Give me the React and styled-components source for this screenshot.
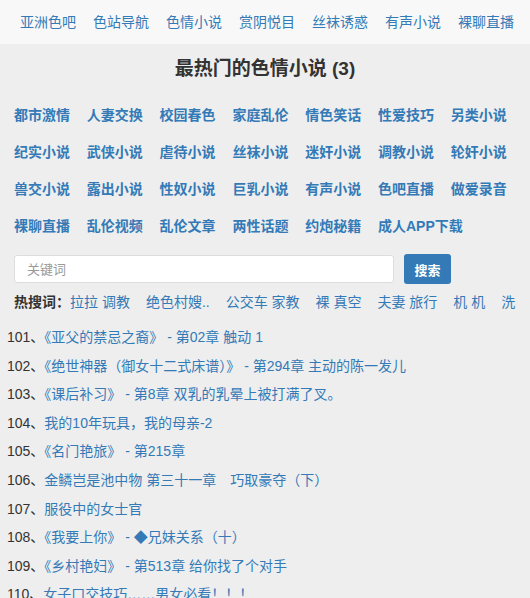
import styled, { createGlobalStyle } from "styled-components"

const GlobalStyle = createGlobalStyle`
    html, body {
        margin: 0;
        padding: 0;
        background: #eeeeee;
        font-family: "Liberation Sans", "Noto Sans CJK SC", sans-serif;
        font-size: 14px;
        color: #333;
        overflow: hidden;
    }
    a {
        color: #337ab7;
        text-decoration: none;
    }
`;

const NavBar = styled.div`
    height: 44px;
    background: #f8f8f8;
    display: flex;
    align-items: center;
    padding-left: 20px;
    gap: 17px;
    white-space: nowrap;
`;

const NavLink = styled.a`
    font-size: 14px;
    line-height: 20px;
`;

const Title = styled.h1`
    margin: 0;
    padding-top: 13px;
    text-align: center;
    font-size: 19px;
    line-height: 24px;
    font-weight: bold;
    color: #333;
`;

const CatGrid = styled.div`
    display: flex;
    flex-wrap: wrap;
    padding: 24px 0 0 14px;
    row-gap: 17px;
`;

const CatLink = styled.a`
    width: 72.8px;
    font-weight: bold;
    font-size: 14px;
    line-height: 20px;
    white-space: nowrap;
`;

const SearchRow = styled.form`
    display: flex;
    align-items: center;
    padding: 18px 0 0 14px;
    gap: 10px;
`;

const SearchInput = styled.input`
    width: 380px;
    height: 28px;
    box-sizing: border-box;
    border: 1px solid #ddd;
    border-radius: 3px;
    background: #fff;
    padding: 0 12px;
    font-family: inherit;
    font-size: 13px;
    &::placeholder { color: #999; }
`;

const SearchButton = styled.button`
    width: 47px;
    height: 30px;
    border: none;
    border-radius: 3px;
    background: #337ab7;
    color: #fff;
    font-family: inherit;
    font-size: 13px;
    font-weight: bold;
`;

const HotRow = styled.div`
    display: flex;
    padding: 8px 0 0 14px;
    white-space: nowrap;
    line-height: 20px;
    gap: 16px;
`;

const HotLabel = styled.b`
    color: #333;
    margin-right: -16px;
`;

const List = styled.ul`
    list-style: none;
    margin: 0;
    padding: 15px 0 0 7px;
`;

const Item = styled.li`
    line-height: 20px;
    margin-bottom: 8.6px;
    white-space: nowrap;
`;

const nav = ["亚洲色吧", "色站导航", "色情小说", "赏阴悦目", "丝袜诱惑", "有声小说", "裸聊直播"];
const cats = [
    "都市激情", "人妻交换", "校园春色", "家庭乱伦", "情色笑话", "性爱技巧", "另类小说",
    "纪实小说", "武侠小说", "虐待小说", "丝袜小说", "迷奸小说", "调教小说", "轮奸小说",
    "兽交小说", "露出小说", "性奴小说", "巨乳小说", "有声小说", "色吧直播", "做爱录音",
    "裸聊直播", "乱伦视频", "乱伦文章", "两性话题", "约炮秘籍", "成人APP下载",
];
const hot = ["拉拉 调教", "绝色村嫂..", "公交车 家教", "裸 真空", "夫妻 旅行", "机 机", "洗"];
const items = [
    "《亚父的禁忌之裔》 - 第02章 触动 1",
    "《绝世神器（御女十二式床谱）》 - 第294章 主动的陈一发儿",
    "《课后补习》 - 第8章 双乳的乳晕上被打满了叉。",
    "我的10年玩具，我的母亲-2",
    "《名门艳旅》 - 第215章",
    "金鳞岂是池中物 第三十一章　巧取豪夺（下）",
    "服役中的女士官",
    "《我要上你》 - ◆兄妹关系（十）",
    "《乡村艳妇》 - 第513章 给你找了个对手",
    "女子口交技巧……男女必看！！！",
];

export default function App() {
    return (
        <>
            <GlobalStyle />
            <NavBar>
                {nav.map((n) => <NavLink key={n} href="#">{n}</NavLink>)}
            </NavBar>
            <Title>最热门的色情小说 (3)</Title>
            <CatGrid>
                {cats.map((c, i) => <CatLink key={i} href="#">{c}</CatLink>)}
            </CatGrid>
            <SearchRow onSubmit={(e) => e.preventDefault()}>
                <SearchInput placeholder="关键词" />
                <SearchButton>搜索</SearchButton>
            </SearchRow>
            <HotRow>
                <HotLabel>热搜词：</HotLabel>
                {hot.map((h) => <a key={h} href="#">{h}</a>)}
            </HotRow>
            <List>
                {items.map((t, i) => (
                    <Item key={i}>{101 + i}、<a href="#">{t}</a></Item>
                ))}
            </List>
        </>
    )
}
